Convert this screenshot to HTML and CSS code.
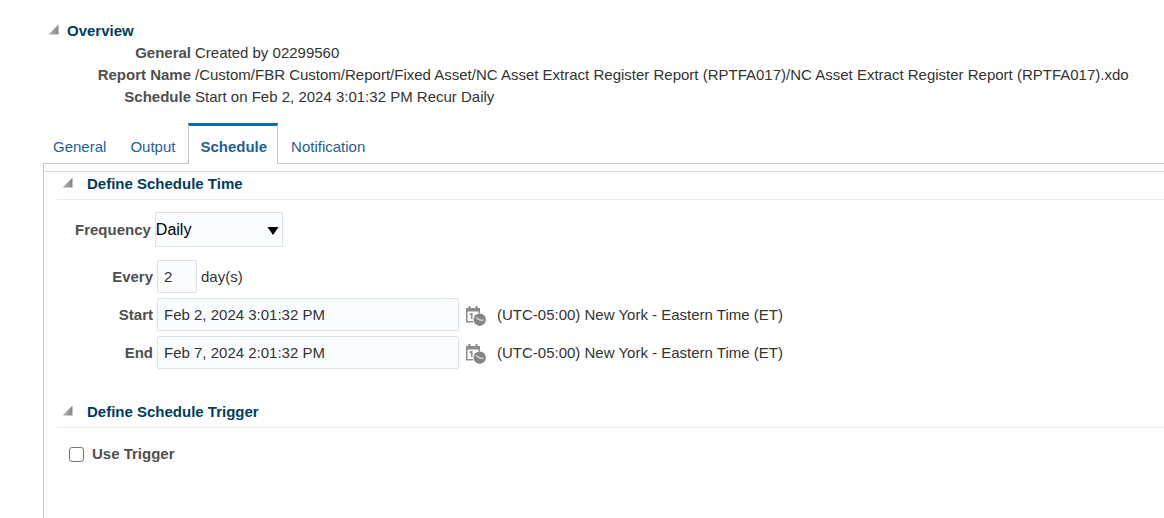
FILE: index.html
```html
<!DOCTYPE html>
<html lang="en">
<head>
<meta charset="utf-8">
<title>Schedule</title>
<link rel="stylesheet" href="styles.css">
</head>
<body>
<svg class="defs" aria-hidden="true">
  <defs>
    <linearGradient id="shade" x1="0" y1="0" x2="1" y2="0">
      <stop offset="0" stop-color="#b8b8b8"/>
      <stop offset="1" stop-color="#858585"/>
    </linearGradient>
    <symbol id="disclose" viewBox="0 0 11 11"><path d="M10.5 0.5V10.5H0.5Z" fill="url(#shade)"/></symbol>
    <symbol id="calendar" viewBox="0 0 20 20">
      <path d="M0 2H14V7.500H12.500V5.500H1.500V15H7V16.500H0Z" fill="#8c8c8c"/>
      <path d="M2.500 0H4.500V3H2.500ZM9.500 0H11.500V3H9.500Z" fill="#8c8c8c"/>
      <path d="M3.500 8L5 7H6.500V13H5V9H3.500Z" fill="#8c8c8c"/>
      <circle cx="13.700" cy="13.700" r="6.200" fill="#858585"/>
      <path d="M10 11.500L14 14.200H17.500" fill="none" stroke="#e4e4e4" stroke-width="1.300"/>
    </symbol>
  </defs>
</svg>
<main class="page">
  <section class="overview">
    <h2 class="heading"><svg class="arrow"><use href="#disclose"/></svg>Overview</h2>
    <dl class="facts">
      <dt>General</dt><dd>Created by 02299560</dd>
      <dt>Report Name</dt><dd>/Custom/FBR Custom/Report/Fixed Asset/NC Asset Extract Register Report (RPTFA017)/NC Asset Extract Register Report (RPTFA017).xdo</dd>
      <dt>Schedule</dt><dd>Start on Feb 2, 2024 3:01:32 PM Recur Daily</dd>
    </dl>
  </section>
  <nav class="tabs">
    <a class="tab" href="#general">General</a>
    <a class="tab" href="#output">Output</a>
    <a class="tab active" href="#schedule" aria-current="page">Schedule</a>
    <a class="tab" href="#notification">Notification</a>
  </nav>
  <div class="panel">
    <section class="group">
      <h2 class="heading ruled"><svg class="arrow"><use href="#disclose"/></svg>Define Schedule Time</h2>
      <div class="frequency">
        <label for="frequency">Frequency</label>
        <div class="picker">
          <select id="frequency"><option>Daily</option><option>Weekly</option></select>
          <svg class="caret" viewBox="0 0 12 8"><path d="M0.500 0H11.500L6 8Z"/></svg>
        </div>
      </div>
      <div class="fields">
        <label for="every">Every</label>
        <div class="value"><input class="short" id="every" type="text" value="2"><span class="unit">day(s)</span></div>
        <label for="start">Start</label>
        <div class="value"><input class="date" id="start" type="text" value="Feb 2, 2024 3:01:32 PM"><button class="pick" type="button" aria-label="Select start"><svg><use href="#calendar"/></svg></button><span>(UTC-05:00) New York - Eastern Time (ET)</span></div>
        <label for="end">End</label>
        <div class="value"><input class="date" id="end" type="text" value="Feb 7, 2024 2:01:32 PM"><button class="pick" type="button" aria-label="Select end"><svg><use href="#calendar"/></svg></button><span>(UTC-05:00) New York - Eastern Time (ET)</span></div>
      </div>
    </section>
    <section class="group trigger">
      <h2 class="heading ruled"><svg class="arrow"><use href="#disclose"/></svg>Define Schedule Trigger</h2>
      <div class="check"><input id="trigger" type="checkbox"><label for="trigger">Use Trigger</label></div>
    </section>
  </div>
</main>
</body>
</html>
```
FILE: styles.css
```css
* { box-sizing: border-box; }
body {
  margin: 0;
  background: #fff;
  color: #333;
  font: 15px/22px "Liberation Sans", Arial, sans-serif;
}
input, select, button { font: inherit; color: inherit; margin: 0; }
.defs { position: absolute; width: 0; height: 0; }
.page {
  display: flex;
  flex-direction: column;
  min-height: 100vh;
  padding: 20px 0 0 43px;
}
.heading {
  display: flex;
  align-items: center;
  margin: 0;
  color: #003d5b;
  font-size: 15px;
  line-height: 22px;
}
.arrow { width: 11px; height: 11px; margin: 0 8px 3px 5px; }
.facts {
  display: grid;
  grid-template-columns: 148px 1fr;
  column-gap: 4px;
  margin: 0;
  white-space: nowrap;
}
.facts dt, label { color: #4f4f4f; font-weight: bold; text-align: right; }
.facts dd { margin: 0; }
.tabs { display: flex; margin-top: 15px; border-bottom: 1px solid #c4c8ca; }
.tab {
  height: 40px;
  padding: 13px 13px 0 12px;
  color: #1f5f96;
  text-decoration: none;
}
.tab:first-child { padding: 13px 12px 0 10px; }
.tab.active {
  height: 41px;
  margin-bottom: -1px;
  padding: 10px 10px 0 11px;
  border: 1px solid #c4c8ca;
  border-top: 3px solid #0f6cb3;
  border-bottom: 0;
  background: #fff;
  font-weight: bold;
}
.tab.active + .tab { padding-left: 13px; }
.panel {
  flex: 1;
  padding-top: 7px;
  border-left: 1px solid #c4c8ca;
}
.group { padding-left: 13px; }
.group:first-child { border-top: 1px solid #d6dadc; }
.ruled { height: 28px; padding-bottom: 3px; border-bottom: 1px solid #ececec; }
.ruled .arrow { margin-right: 14px; }
.frequency { display: flex; align-items: center; gap: 4px; margin: 12px 0 13px 18px; }
.picker { position: relative; width: 128px; height: 35px; }
.picker select {
  appearance: none;
  width: 100%;
  height: 100%;
  padding: 0;
  border: 1px solid #dde3e8;
  border-radius: 0;
  background: #fafcfe;
  color: #000;
  font-size: 16px;
}
.caret { position: absolute; right: 4px; top: 15px; width: 12px; height: 8px; pointer-events: none; }
.fields {
  display: grid;
  grid-template-columns: 96px 1fr;
  align-items: center;
  gap: 5px 4px;
}
.value { display: flex; align-items: center; white-space: nowrap; }
.value input {
  height: 33px;
  padding: 0 6px;
  border: 1px solid #dde3e8;
  border-radius: 2px;
  background: #fafcfe;
}
.short { width: 40px; }
.date { width: 302px; }
.unit { margin-left: 4px; }
.pick { display: flex; margin: 2px 11px 0 7px; padding: 0; border: 0; background: none; }
.pick svg { width: 20px; height: 20px; }
.trigger { margin-top: 31px; }
.check { display: flex; align-items: center; gap: 8px; margin: 15px 0 0 12px; }
.check input {
  appearance: none;
  width: 15px;
  height: 15px;
  border: 1px solid #767676;
  border-radius: 3px;
  background: #fff;
}
```
